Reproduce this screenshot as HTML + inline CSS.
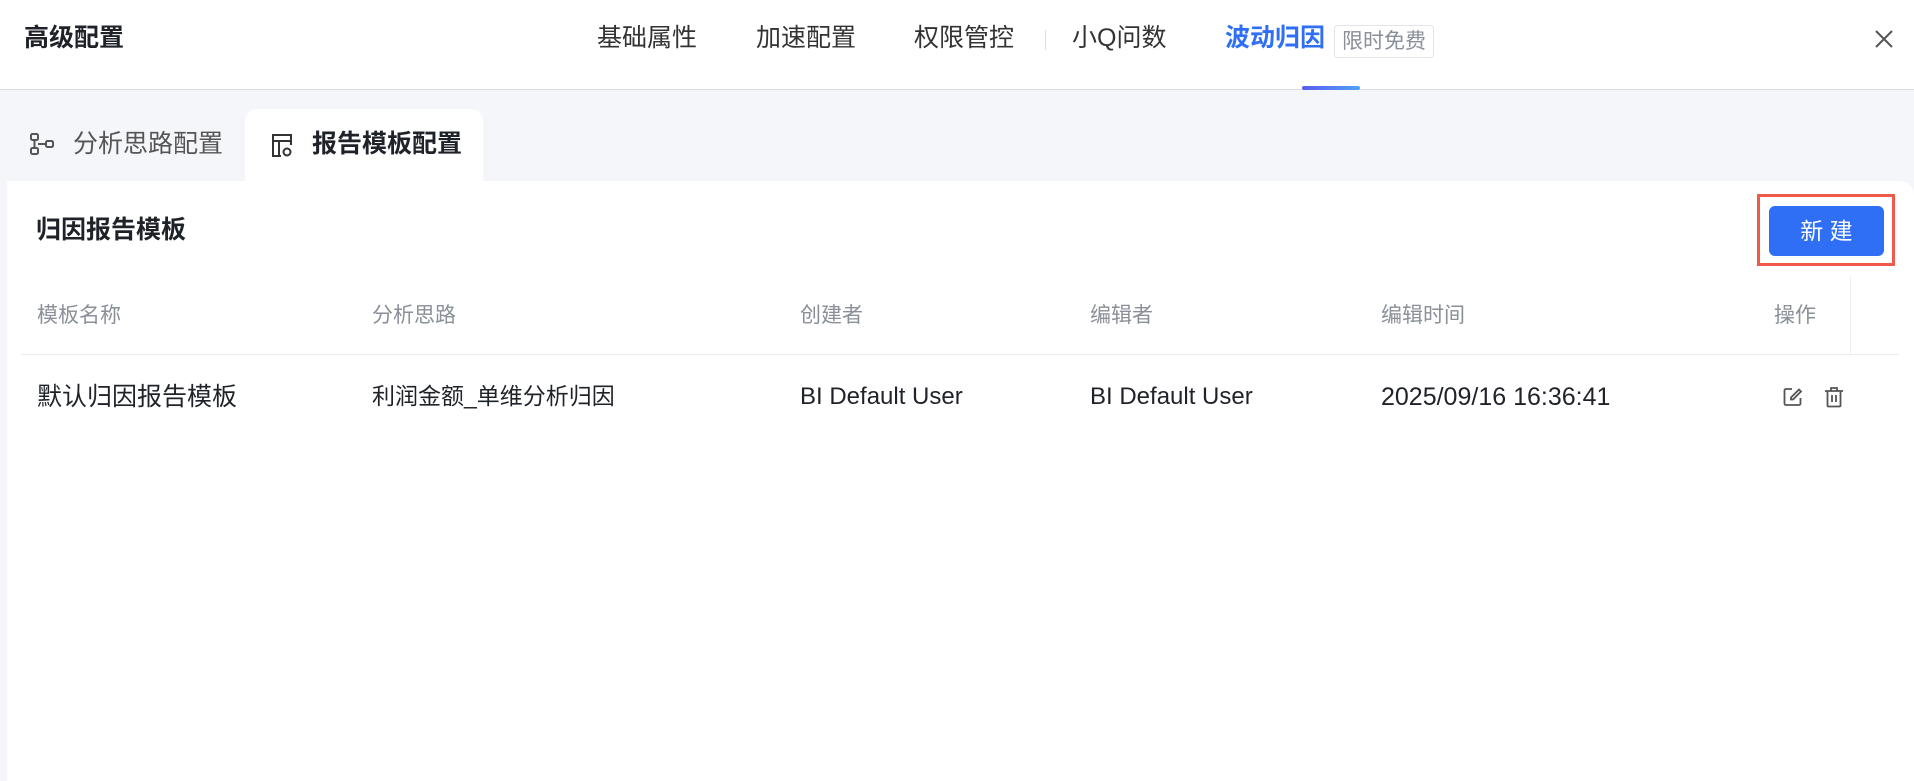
<!DOCTYPE html>
<html><head><meta charset="utf-8"><style>
*{margin:0;padding:0;box-sizing:border-box}
body{width:1914px;height:778px;background:#f5f6fa;font-family:"Liberation Sans","Noto Sans CJK SC",sans-serif;position:relative;overflow:hidden;color:#1f2329}
.a{position:absolute;white-space:nowrap;line-height:1}
#hdr{position:absolute;left:0;top:0;width:1914px;height:90px;background:#fff;border-bottom:1px solid #dcdde3}
.nav{font-size:25px;color:#333;top:26px}
.th{font-size:21px;color:#8a8f99;top:305px}
.td{font-size:24px;color:#1f2329;top:385px}
</style></head><body>
<div id="hdr"></div>
<div class="a" style="left:24px;top:26px;font-size:25px;font-weight:bold;color:#1f2329">高级配置</div>
<div class="a nav" style="left:597px">基础属性</div>
<div class="a nav" style="left:756px">加速配置</div>
<div class="a nav" style="left:914px">权限管控</div>
<div class="a" style="left:1045px;top:30px;width:1px;height:20px;background:#dcdde3"></div>
<div class="a nav" style="left:1072px">小Q问数</div>
<div class="a nav" style="left:1225px;color:#2f6ff6;font-weight:bold">波动归因</div>
<div class="a" style="left:1334px;top:25px;height:33px;padding:5px 7px;border:1px solid #e3e4e8;border-radius:4px;font-size:21px;color:#8a8f99">限时免费</div>
<div class="a" style="left:1302px;top:86px;width:58px;height:4px;border-radius:2px;background:linear-gradient(90deg,#5b5cf0,#4fa2f7)"></div>
<svg class="a" style="left:1874px;top:29px" width="20" height="20" viewBox="0 0 20 20"><path d="M2 2L18 18M18 2L2 18" stroke="#555" stroke-width="2"/></svg>

<svg class="a" style="left:30px;top:133px" width="26" height="24" viewBox="0 0 26 24" fill="none" stroke="#555" stroke-width="2"><rect x="1" y="1" width="7" height="6" rx="1.5"/><rect x="1" y="15" width="7" height="6" rx="1.5"/><rect x="16" y="8" width="7" height="6" rx="1.5"/><path d="M4.5 7V15M8 11H16"/></svg>
<div class="a" style="left:73px;top:132px;font-size:25px;color:#555">分析思路配置</div>
<div class="a" style="left:245px;top:109px;width:238px;height:80px;background:#fff;border-radius:12px 12px 0 0"></div>
<svg class="a" style="left:271px;top:133px" width="24" height="26" viewBox="0 0 24 26" fill="none" stroke="#333" stroke-width="2"><path d="M10 23H2V2h18v10"/><path d="M2 8H20M8 8V23"/><circle cx="16" cy="19" r="3.5"/></svg>
<div class="a" style="left:312px;top:132px;font-size:25px;font-weight:bold;color:#1f2329">报告模板配置</div>

<div class="a" style="left:7px;top:181px;width:1907px;height:600px;background:#fff;border-radius:0 14px 0 0"></div>
<div class="a" style="left:36px;top:218px;font-size:25px;font-weight:bold">归因报告模板</div>
<div class="a" style="left:1757px;top:194px;width:138px;height:72px;border:3px solid #f05a4a"></div>
<div class="a" style="left:1769px;top:206px;width:115px;height:50px;background:#2f6ff6;border-radius:6px;color:#fff;font-size:23px;text-align:center;line-height:50px">新 建</div>

<div class="a" style="left:21px;top:354px;width:1878px;height:1px;background:#eceef2"></div>
<div class="a" style="left:1850px;top:276px;width:1px;height:78px;background:#eceef2"></div>
<div class="a th" style="left:37px">模板名称</div>
<div class="a th" style="left:372px">分析思路</div>
<div class="a th" style="left:800px">创建者</div>
<div class="a th" style="left:1090px">编辑者</div>
<div class="a th" style="left:1381px">编辑时间</div>
<div class="a th" style="left:1774px">操作</div>
<div class="a td" style="left:37px;font-size:25px">默认归因报告模板</div>
<div class="a td" style="left:372px;font-size:23px">利润金额_单维分析归因</div>
<div class="a td" style="left:800px">BI Default User</div>
<div class="a td" style="left:1090px">BI Default User</div>
<div class="a td" style="left:1381px;font-size:25px">2025/09/16 16:36:41</div>
<svg class="a" style="left:1783px;top:387px" width="20" height="20" viewBox="0 0 20 20" fill="none" stroke="#555" stroke-width="1.8"><path d="M9 2H3a1.5 1.5 0 0 0-1.5 1.5v13A1.5 1.5 0 0 0 3 18h13a1.5 1.5 0 0 0 1.5-1.5V11"/><path d="M16 2.5l2 2-8 8H8v-2z"/></svg>
<svg class="a" style="left:1824px;top:386px" width="20" height="22" viewBox="0 0 20 22" fill="none" stroke="#555" stroke-width="1.8"><path d="M1 5H19M7 5V2h6v3M3.5 5v14.5a1 1 0 0 0 1 1h11a1 1 0 0 0 1-1V5M8 9v7M12 9v7"/></svg>
</body></html>
